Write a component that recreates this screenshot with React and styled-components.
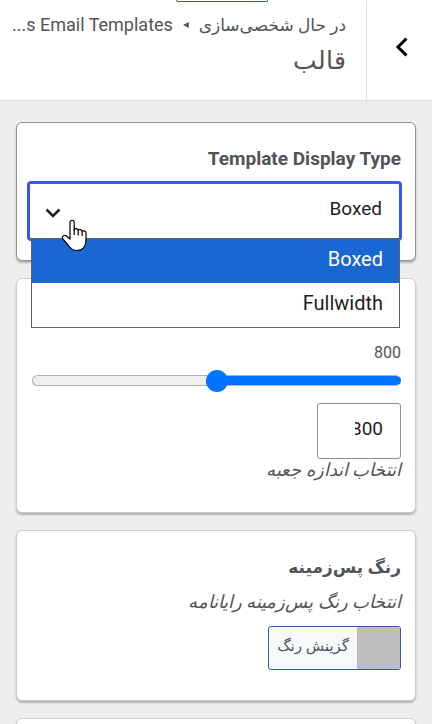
import React, { useState } from 'react';
import styled, { createGlobalStyle } from 'styled-components';

const WHITE = '#ffffff';
const PAGE = '#eeeeee';
const TEXT = '#505458';
const DARK = '#1e1e1e';
const LINE = '#dddddd';
const FOCUS = '#3858e9';
const SELECTED = '#1967d2';
const RANGE = '#0075ff';
const FONT = "Roboto, 'DejaVu Sans', sans-serif";

const MIN_WIDTH = 500;
const MAX_WIDTH = 1100;

const displayTypes = ['Boxed', 'Fullwidth'];

const PanelHeader = () => {
	return (
		<HeaderStyles>
			<BackButton type='button' aria-label='بازگشت'>
				<svg width='14' height='20' viewBox='0 0 14 20' fill='none' stroke='#000' strokeWidth='3'>
					<path d='M11.5 1.5 3 10l8.500 8.500' />
				</svg>
			</BackButton>
			<HeaderText>
				<Trail>
					<span>در حال شخصی‌سازی</span>
					<svg width='6' height='6' viewBox='0 0 6 6' fill={TEXT}>
						<path d='M0 3 6 0v6z' />
					</svg>
					<bdi>...s Email Templates</bdi>
				</Trail>
				<Title>قالب</Title>
			</HeaderText>
		</HeaderStyles>
	);
};

const DisplayType = () => {
	const [type, setType] = useState('Boxed');

	return (
		<Card $active>
			<Label htmlFor='display-type'>Template Display Type</Label>
			<SelectWrap>
				<Select id='display-type' value={type} onChange={e => setType(e.target.value)}>
					{displayTypes.map(name => (
						<option key={name}>{name}</option>
					))}
				</Select>
				<Chevron width='16' height='10' viewBox='0 0 16 10' fill='none' stroke={DARK} strokeWidth='2.500'>
					<path d='m1.500 1.500 6.500 6.500 6.500-6.500' />
				</Chevron>
				<Options role='listbox' aria-labelledby='display-type'>
					{displayTypes.map(name => (
						<Option
							key={name}
							role='option'
							aria-selected={name === type}
							$selected={name === type}
							onClick={() => setType(name)}
						>
							{name}
						</Option>
					))}
				</Options>
				<Pointer />
			</SelectWrap>
		</Card>
	);
};

const Pointer = () => (
	<Hand width='26' height='33' viewBox='0 0 26 33'>
		<path
			d='M9 18V3.500C9 .5 13.200.5 13.200 3.500V11c.5-2 4-1.800 4 .5 .8-1.600 3.900-1.300 3.900 1 .9-1.200 3.900-.8 3.900 1.500v7c0 6-3 10.500-9 10.500-4.500 0-7-2.500-9-5.500L1.500 19.500C.5 17 3.500 15.500 5.500 17L9 20z'
			fill='#fff'
			stroke='#000'
			strokeWidth='1.200'
			strokeLinejoin='round'
		/>
		<path d='M13.200 10v6M17.200 11.500v5M21.100 12.500v4.500' fill='none' stroke='#000' strokeWidth='1.200' />
	</Hand>
);

const BoxWidth = () => {
	const [width, setWidth] = useState(800);
	const filled = ((width - MIN_WIDTH) / (MAX_WIDTH - MIN_WIDTH)) * 100;
	const update = e => setWidth(Number(e.target.value));

	return (
		<SizeCard>
			<Value>{width}</Value>
			<Slider
				type='range'
				aria-labelledby='box-width-hint'
				min={MIN_WIDTH}
				max={MAX_WIDTH}
				value={width}
				onChange={update}
				style={{ '--filled': `${filled}%` }}
			/>
			<NumberInput type='number' aria-labelledby='box-width-hint' value={width} onChange={update} />
			<Hint id='box-width-hint'>انتخاب اندازه جعبه</Hint>
		</SizeCard>
	);
};

const BackgroundColor = () => {
	return (
		<ColorCard>
			<ColorHeading>رنگ پس‌زمینه</ColorHeading>
			<Hint>انتخاب رنگ پس‌زمینه رایانامه</Hint>
			<ColorButton type='button'>
				<Swatch />
				<span>گزینش رنگ</span>
			</ColorButton>
		</ColorCard>
	);
};

export default function App() {
	return (
		<Panel dir='rtl' lang='fa'>
			<GlobalStyles />
			<ActionBar>
				<ActionEdge />
			</ActionBar>
			<PanelHeader />
			<Controls>
				<DisplayType />
				<BoxWidth />
				<BackgroundColor />
				<Card />
			</Controls>
		</Panel>
	);
}

const GlobalStyles = createGlobalStyle`
	* {
		box-sizing: border-box;
	}

	body {
		margin: 0;
		background: ${PAGE};
		color: ${TEXT};
		font-family: ${FONT};
	}

	html {
		scrollbar-width: none;
	}

	button,
	input,
	select {
		font-family: inherit;
	}
`;

const Panel = styled.main`
	display: flex;
	flex-direction: column;
`;

const ActionBar = styled.div`
	display: flex;
	justify-content: center;
	padding-left: 11px;
	height: 2px;
	background: ${WHITE};
`;

const ActionEdge = styled.span`
	width: 92px;
	border: 1px solid #3858b0;
	border-top: 0;
	border-radius: 0 0 3px 3px;
`;

const HeaderStyles = styled.header`
	display: flex;
	height: 99px;
	background: ${WHITE};
	border-bottom: 1px solid ${LINE};
`;

const BackButton = styled.button`
	display: flex;
	align-items: center;
	justify-content: center;
	flex: none;
	width: 66px;
	padding: 0 0 8px 4px;
	background: none;
	border: 0;
	border-left: 1px solid ${LINE};
`;

const HeaderText = styled.div`
	flex: 1;
	min-width: 0;
	padding: 11px 20px 0 12px;
`;

const Trail = styled.div`
	display: flex;
	align-items: center;
	gap: 10px;
	font-size: 17px;
	line-height: 24px;
	white-space: nowrap;

	bdi {
		font-size: 18px;
	}
`;

const Title = styled.h2`
	margin: 6px 0 0;
	font-size: 25px;
	font-weight: 200;
	line-height: 36px;
`;

const Controls = styled.div`
	display: flex;
	flex-direction: column;
	gap: 17px;
	padding: 21px 16px 0;
`;

const Card = styled.section`
	display: flex;
	flex-direction: column;
	align-items: flex-start;
	padding: 22px 14px 19px 10px;
	background: ${WHITE};
	border: 1px solid ${props => (props.$active ? '#8c8f94' : '#cccccc')};
	border-radius: 6px;
	box-shadow: 0 2px 2px rgba(0, 0, 0, 0.25);
`;

const SizeCard = styled(Card)`
	padding-top: 62px;
	padding-bottom: 31px;
`;

const ColorCard = styled(Card)`
	padding-bottom: 30px;
`;

const Label = styled.label`
	margin: 0;
	font-size: 19px;
	font-weight: 700;
	line-height: 28px;
`;

const ColorHeading = styled.h3`
	margin: 0 0 10px;
	font-size: 17px;
	font-weight: 700;
	line-height: 28px;
`;

const SelectWrap = styled.div`
	position: relative;
	align-self: stretch;
	margin: 8px -1px 0 0;
`;

const Select = styled.select`
	display: block;
	appearance: none;
	width: 100%;
	height: 60px;
	padding: 0 17px 6px;
	background: ${WHITE};
	border: 3px solid ${FOCUS};
	border-radius: 4px;
	color: ${DARK};
	font-size: 19px;
	outline: 0;
`;

const Chevron = styled.svg`
	position: absolute;
	top: 27px;
	left: 18px;
	pointer-events: none;
`;

const Options = styled.ul`
	position: absolute;
	z-index: 1;
	top: 57px;
	left: 4px;
	right: 2px;
	margin: 0;
	padding: 0;
	background: ${WHITE};
	border: 1px solid #5f6368;
	list-style: none;
`;

const Option = styled.li`
	padding: 0 16px 4px;
	background: ${props => (props.$selected ? SELECTED : WHITE)};
	color: ${props => (props.$selected ? WHITE : DARK)};
	font-size: 20px;
	line-height: 40px;
`;

const Hand = styled.svg`
	position: absolute;
	z-index: 2;
	top: 38px;
	left: 34px;
	pointer-events: none;
`;

const Value = styled.output`
	font-size: 16px;
	line-height: 24px;
`;

const Slider = styled.input`
	appearance: none;
	align-self: stretch;
	height: 22px;
	margin: 4px 0 0 5px;
	background: none;

	&::-webkit-slider-runnable-track {
		height: 11px;
		background: linear-gradient(to left, ${RANGE} var(--filled), #efefef var(--filled));
		border: 1px solid #b2b2b2;
		border-right-color: ${RANGE};
		border-radius: 6px;
		background-origin: border-box;
	}

	&::-webkit-slider-thumb {
		appearance: none;
		width: 22px;
		height: 22px;
		margin-top: -6px;
		background: ${RANGE};
		border-radius: 50%;
	}
`;

const NumberInput = styled.input`
	appearance: textfield;
	width: 84px;
	height: 56px;
	margin-top: 12px;
	padding: 0 17px 6px 37px;
	border: 1px solid #8c8f94;
	border-radius: 3px;
	color: ${DARK};
	font-size: 19px;

	&::-webkit-inner-spin-button {
		display: none;
	}
`;

const Hint = styled.p`
	margin: 0;
	font-size: 18px;
	font-style: italic;
	line-height: 22px;
`;

const ColorButton = styled.button`
	display: flex;
	height: 44px;
	margin-top: 13px;
	padding: 0;
	overflow: hidden;
	background: #f6f9fa;
	border: 1px solid #3858b0;
	border-radius: 3px;
	color: ${TEXT};
	font-size: 15px;
	line-height: 38px;

	span:last-child {
		padding: 0 8px;
	}
`;

const Swatch = styled.span`
	width: 43px;
	background: #bdbdbd;
`;
